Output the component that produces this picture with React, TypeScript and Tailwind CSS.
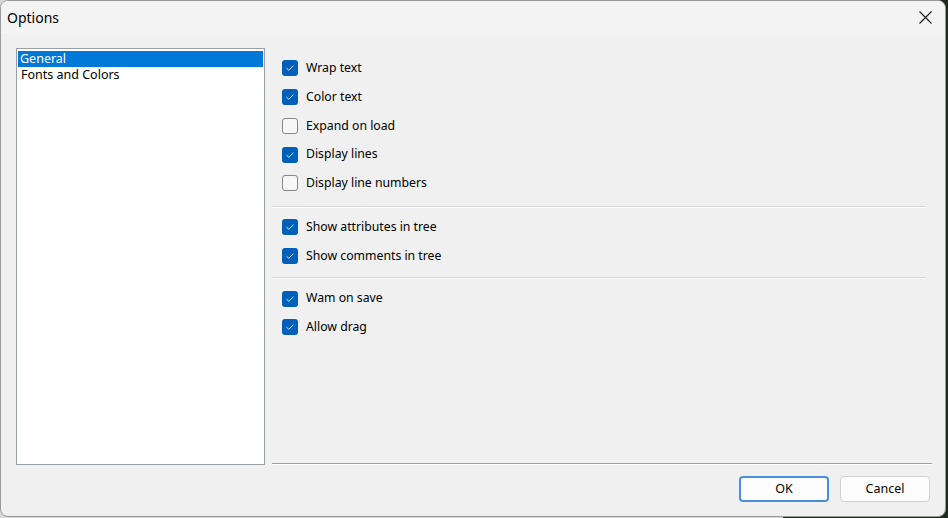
import React from "react";

const font = { fontFamily: '"Noto Sans", "Open Sans", sans-serif' };

type Opt = { label: string; checked: boolean };

const groups: Opt[][] = [
  [
    { label: "Wrap text", checked: true },
    { label: "Color text", checked: true },
    { label: "Expand on load", checked: false },
    { label: "Display lines", checked: true },
    { label: "Display line numbers", checked: false },
  ],
  [
    { label: "Show attributes in tree", checked: true },
    { label: "Show comments in tree", checked: true },
  ],
  [
    { label: "Wam on save", checked: true },
    { label: "Allow drag", checked: true },
  ],
];

function CheckBox({ checked }: { checked: boolean }) {
  if (checked) {
    return (
      <div className="w-4 h-4 rounded-[3px] bg-[#005fb8] flex items-center justify-center shrink-0">
        <svg width="10" height="8" viewBox="0 0 10 8">
          <path d="M1.5 4.2 L3.8 6.3 L8.5 1.6" fill="none" stroke="#dbe8f5" strokeWidth="1" />
        </svg>
      </div>
    );
  }
  return <div className="w-4 h-4 rounded-[3px] border border-[#878787] bg-[#f7f7f7] shrink-0" />;
}

function Row({ o }: { o: Opt }) {
  return (
    <div className="h-[28.75px] flex items-center gap-[8px] text-[12.25px] text-black">
      <CheckBox checked={o.checked} />
      <span>{o.label}</span>
    </div>
  );
}

export default function App() {
  return (
    <div
      className="w-[948px] h-[518px] bg-[linear-gradient(to_right,#d8d8d8_0,#d8d8d8_783px,#1d2a1d_783px,#1d2a1d_100%)]"
      style={font}
    >
      <div className="w-[946px] h-[517px] border border-[#9a9a9a] rounded-[8px] bg-[#f0f0f0] flex flex-col overflow-hidden">
        {/* title bar */}
        <div className="h-[32px] bg-[#f3f3f3] flex items-center justify-between pl-[6px] pr-[13px] shrink-0">
          <span className="text-[14px] text-black">Options</span>
          <svg width="13" height="13" viewBox="0 0 13 13">
            <path d="M0.5 0.5 L12.5 12.5 M12.5 0.5 L0.5 12.5" stroke="#1a1a1a" strokeWidth="1.1" />
          </svg>
        </div>

        {/* body */}
        <div className="flex pt-[15px] pl-[15px] pr-[13px]">
          <div className="w-[249px] h-[417px] border border-[#9a9fa6] bg-white pt-[2px] px-[1px] shrink-0">
            <div className="h-[16px] bg-[#0078d7] text-white text-[12.5px] leading-[16px] pl-[2px]">General</div>
            <div className="h-[16px] text-black text-[12.5px] leading-[16px] pl-[3px]">Fonts and Colors</div>
          </div>
          <div className="flex-1 ml-[7px] flex flex-col">
            <div className="flex-1 pl-[10px] pr-[6px]">
              <div className="pt-[6px] pb-[8px]">
                {groups[0].map((o) => (
                  <Row key={o.label} o={o} />
                ))}
              </div>
              <div className="border-t border-[#d6d6d6] border-b border-b-white -ml-[10px]" />
              <div className="pt-[5px] pb-[7px]">
                {groups[1].map((o) => (
                  <Row key={o.label} o={o} />
                ))}
              </div>
              <div className="border-t border-[#d6d6d6] border-b border-b-white -ml-[10px]" />
              <div className="pt-[5px]">
                {groups[2].map((o) => (
                  <Row key={o.label} o={o} />
                ))}
              </div>
            </div>
            <div className="border-t border-[#a0a0a0] border-b border-b-white" />
          </div>
        </div>

        {/* buttons */}
        <div className="flex justify-end gap-[11px] pt-[11px] pr-[15px]">
          <button className="w-[90px] h-[26px] rounded-[4px] border-2 border-[#4a90d9] bg-[#fdfdfd] text-[12.5px] text-black">
            OK
          </button>
          <button className="w-[90px] h-[26px] rounded-[4px] border border-[#d0d0d0] bg-[#fdfdfd] text-[12.5px] text-black">
            Cancel
          </button>
        </div>
      </div>
    </div>
  );
}
